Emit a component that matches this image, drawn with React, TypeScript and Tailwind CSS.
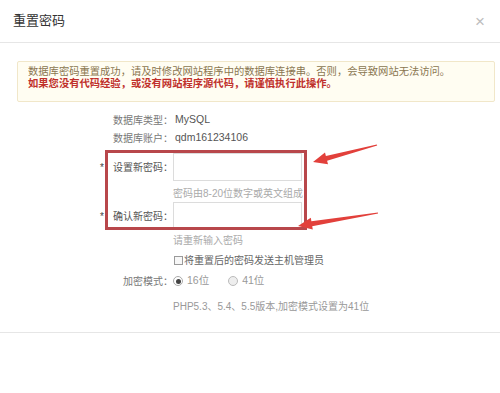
export default function App() {
    return (
        <div
            className="relative w-[500px] h-[393px] overflow-hidden bg-white text-[10px]"
            style={{ fontFamily: '"Liberation Sans", "Noto Sans CJK SC", sans-serif' }}
        >
            {/* Header */}
            <div className="h-[43px] flex items-center justify-between pl-[13px] pr-[15px] border-b border-[#e6e6e6]">
                <span className="text-[13px] text-[#333]">重置密码</span>
                <span className="text-[17px] leading-none text-[#bdbdbd]">×</span>
            </div>

            {/* Notice */}
            <div className="px-[17px] pt-[18px] pr-[5px]">
                <div className="h-[41px] border border-[#f1e7c9] bg-[#fffdf2] rounded-[2px] pl-[10px] pt-[4px] leading-[12px] text-[10.3px]">
                    <div className="text-[#8a7650]">
                        数据库密码重置成功，请及时修改网站程序中的数据库连接串。否则，会导致网站无法访问。
                    </div>
                    <div className="text-[#c0302b] font-bold">
                        如果您没有代码经验，或没有网站程序源代码，请谨慎执行此操作。
                    </div>
                </div>
            </div>

            {/* Form */}
            <div className="flex flex-col">
                <div className="mt-[9px] h-[18px] flex items-center">
                    <div className="w-[173px] text-right text-[#777]">数据库类型：</div>
                    <div className="ml-[2px] text-[#555] text-[10.5px]">MySQL</div>
                </div>
                <div className="h-[18px] flex items-center">
                    <div className="w-[173px] text-right text-[#777]">数据库账户：</div>
                    <div className="ml-[2px] text-[#555] text-[10.5px]">qdm161234106</div>
                </div>

                <div className="mt-[6px] h-[28px] flex items-center">
                    <div className="w-[173px] flex justify-end items-center text-[#555]">
                        <span className="mr-[9px] text-[#444]">*</span>
                        <span>设置新密码：</span>
                    </div>
                    <div className="w-[129px] h-[28px] border border-[#dcdcdc] bg-white"></div>
                </div>
                <div className="mt-[6px] h-[12px] flex items-center pl-[173px] text-[#aaa]">
                    密码由8-20位数字或英文组成
                </div>

                <div className="mt-[3px] h-[28px] flex items-center">
                    <div className="w-[173px] flex justify-end items-center text-[#555]">
                        <span className="mr-[9px] text-[#444]">*</span>
                        <span>确认新密码：</span>
                    </div>
                    <div className="w-[129px] h-[28px] border border-[#dcdcdc] bg-white"></div>
                </div>
                <div className="mt-[4px] h-[12px] flex items-center pl-[173px] text-[#aaa]">
                    请重新输入密码
                </div>

                <div className="mt-[8px] h-[12px] flex items-center pl-[174px]">
                    <span className="w-[9px] h-[9px] border border-[#9a9a9a] bg-[#f7f7f7]"></span>
                    <span className="ml-[1px] text-[#666]">将重置后的密码发送主机管理员</span>
                </div>

                <div className="mt-[9px] h-[12px] flex items-center">
                    <div className="w-[173px] text-right text-[#777]">加密模式：</div>
                    <span className="w-[10px] h-[10px] rounded-full border border-[#aaa] bg-white flex items-center justify-center">
                        <span className="w-[5px] h-[5px] rounded-full bg-[#444]"></span>
                    </span>
                    <span className="ml-[4px] text-[#999] text-[10.5px]">16位</span>
                    <span className="ml-[19px] w-[10px] h-[10px] rounded-full border border-[#bbb] bg-[#eee]"></span>
                    <span className="ml-[4px] text-[#999] text-[10.5px]">41位</span>
                </div>

                <div className="mt-[13px] h-[12px] flex items-center pl-[173px] text-[#999]">
                    PHP5.3、5.4、5.5版本,加密模式设置为41位
                </div>

                <div className="mt-[20px] border-t border-[#e6e6e6]"></div>
            </div>

            {/* Annotation: red frame */}
            <div className="absolute left-[105px] top-[150px] w-[202px] h-[80px] border-[3px] border-[#b8474b] pointer-events-none"></div>

            {/* Annotation: arrows */}
            <svg className="absolute left-0 top-0 pointer-events-none" width="500" height="393" viewBox="0 0 500 393">
                <polygon
                    fill="#e2403b"
                    points="313,162 328,164.2 327.1,160.8 377.2,145.6 376.8,144.4 325.9,156 325,152.6"
                />
                <polygon
                    fill="#e2403b"
                    points="298,226 312.8,229.6 312.2,226.2 378.1,213.6 377.9,212.4 311.4,221.2 310.8,217.8"
                />
            </svg>
        </div>
    );
}
